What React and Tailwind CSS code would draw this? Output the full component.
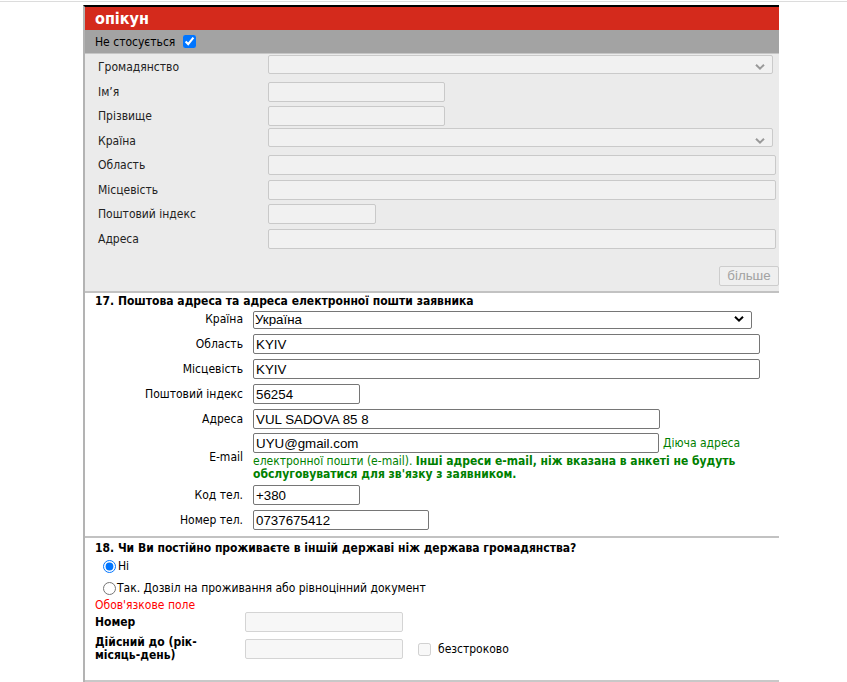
import React from 'react';

const LABEL_FONT = "font-['DejaVu_Sans_Condensed','DejaVu_Sans',sans-serif]";
const INPUT_FONT = "font-['Liberation_Sans',Arial,sans-serif]";

const Chevron = ({ color = '#999' }) => (
    <svg width="10" height="7" viewBox="0 0 10 7" className="pointer-events-none absolute right-[8px] top-1/2 -translate-y-1/2">
        <path d="M1 1.2l4 4 4-4" fill="none" stroke={color} strokeWidth="2" />
    </svg>
);

// disabled rows of the "опікун" block
const guardianRows = [
    { label: 'Громадянство', kind: 'select' },
    { label: 'Ім’я', kind: 'input', w: 'w-[177px]' },
    { label: 'Прізвище', kind: 'input', w: 'w-[177px]' },
    { label: 'Країна', kind: 'select' },
    { label: 'Область', kind: 'input', w: 'w-[508px]' },
    { label: 'Місцевість', kind: 'input', w: 'w-[508px]' },
    { label: 'Поштовий індекс', kind: 'input', w: 'w-[108px]' },
    { label: 'Адреса', kind: 'input', w: 'w-[508px]' },
];

const addressRows = [
    { label: 'Область', value: 'KYIV', w: 'w-[507px]' },
    { label: 'Місцевість', value: 'KYIV', w: 'w-[507px]' },
    { label: 'Поштовий індекс', value: '56254', w: 'w-[107px]' },
    { label: 'Адреса', value: 'VUL SADOVA 85 8', w: 'w-[407px]' },
];

const TextBox = ({ value, w }) => (
    <input
        readOnly
        value={value}
        className={`${w} ${INPUT_FONT} h-[20px] rounded-[2px] border border-[#767676] bg-white px-[2px] text-[13.333px] text-black outline-none`}
    />
);

const Row = ({ label, children, h = 'h-[25px]' }) => (
    <div className={`flex items-center ${h}`}>
        <div className="w-[158px] text-right text-[12px] text-black">{label}</div>
        <div className="ml-[10px]">{children}</div>
    </div>
);

export default function App() {
    return (
        <div className={`min-h-screen bg-white ${LABEL_FONT}`}>
            <div className="h-px bg-[#dcdcdc] mt-px" />
            <div className="ml-[83px] mt-[3px] w-[696px] border-t-2 border-l-2 border-t-black border-l-[#b3b3b3]">
                {/* header */}
                <div className="flex h-[23px] items-center bg-[#d42a1c] pl-[10px] text-[16px] font-bold leading-none text-white">
                    опікун
                </div>
                <div className="flex h-[24px] items-center border-b border-[#c6c6c6] bg-[#a3a3a3] pl-[10px] text-[12px] text-black">
                    Не стосується
                    <input type="checkbox" defaultChecked className="ml-[8px] h-[13px] w-[13px] accent-[#0075ff]" />
                </div>

                {/* disabled guardian block */}
                <div className="border-b-2 border-[#c2c2c2] bg-[#ebebeb] pb-[5px] pl-[13px] pt-px">
                    {guardianRows.map((r) => (
                        <div key={r.label} className="flex h-[24.5px] items-center">
                            <div className="w-[170px] text-[12px] text-[#222]">{r.label}</div>
                            {r.kind === 'select' ? (
                                <div className="relative">
                                    <select disabled className="h-[19px] w-[505px] appearance-none rounded-[2px] border border-[#cacaca] bg-[#f1f1f1]" />
                                    <Chevron />
                                </div>
                            ) : (
                                <input disabled className={`${r.w} h-[20px] rounded-[2px] border border-[#c9c9c9] bg-[#f1f1f1]`} />
                            )}
                        </div>
                    ))}
                    <div className="mt-[15px] flex justify-end">
                        <button
                            disabled
                            className={`${INPUT_FONT} h-[20px] w-[60px] rounded-[2px] border border-[#cdcdcd] bg-[#efefef] text-[13.333px] leading-none text-[#a2a2a2]`}
                        >
                            більше
                        </button>
                    </div>
                </div>

                {/* 17 */}
                <div className="border-b-2 border-[#c2c2c2] bg-white pb-[4px]">
                    <div className="h-[14px] pl-[10px] pt-px text-[12px] font-bold leading-[14px] text-black">
                        17. Поштова адреса та адреса електронної пошти заявника
                    </div>
                    <Row label="Країна" h="h-[24px]">
                        <div className="relative">
                            <select className={`${INPUT_FONT} h-[18px] w-[499px] appearance-none rounded-[2px] border border-[#767676] bg-white pl-px text-[13.333px] leading-none text-black`}>
                                <option>Україна</option>
                            </select>
                            <Chevron color="#000" />
                        </div>
                    </Row>
                    {addressRows.map((r) => (
                        <Row key={r.label} label={r.label}>
                            <TextBox value={r.value} w={r.w} />
                        </Row>
                    ))}
                    <div className="flex items-center">
                        <div className="w-[158px] text-right text-[12px] text-black">E-mail</div>
                        <div className="ml-[10px] w-[507px] pb-px pt-[2px]">
                            <div className="flex items-center">
                                <TextBox value="UYU@gmail.com" w="w-[406px]" />
                                <span className="ml-[4px] text-[12px] text-[#008000]">Діюча адреса</span>
                            </div>
                            <div className="mt-[2px] text-[12px] leading-[13px] text-[#008000]">
                                електронної пошти (e-mail). <b>Інші адреси e-mail, ніж вказана в анкеті не будуть</b>
                                <br />
                                <b>обслуговуватися для зв'язку з заявником.</b>
                            </div>
                        </div>
                    </div>
                    <Row label="Код тел.">
                        <TextBox value="+380" w="w-[107px]" />
                    </Row>
                    <Row label="Номер тел.">
                        <TextBox value="0737675412" w="w-[176px]" />
                    </Row>
                </div>

                {/* 18 */}
                <div className="border-b-2 border-[#c8c8c8] bg-white pb-[18px]">
                    <div className="pl-[10px] pt-[3px] text-[12px] font-bold leading-[14px] text-black">
                        18. Чи Ви постійно проживаєте в іншій державі ніж держава громадянства?
                    </div>
                    <label className="mt-[4px] flex h-[14px] items-center pl-[18px] text-[12px] text-black">
                        <input type="radio" name="res" defaultChecked className="m-0 h-[13px] w-[13px] accent-[#0075ff]" />
                        <span className="ml-[2px]">Ні</span>
                    </label>
                    <label className="mt-[8px] flex h-[14px] items-center pl-[18px] text-[12px] text-black">
                        <input type="radio" name="res" className="m-0 h-[13px] w-[13px]" />
                        <span className="ml-px">Так. Дозвіл на проживання або рівноцінний документ</span>
                    </label>
                    <div className="mt-[4px] pl-[10px] text-[12px] leading-[12px] text-[#ff0000]">Обов'язкове поле</div>
                    <div className="mt-px flex h-[20px] items-center pl-[10px]">
                        <div className="w-[150px] pr-[10px] text-[12px] font-bold text-black">Номер</div>
                        <input disabled className="h-[20px] w-[158px] rounded-[2px] border border-[#d4d4d4] bg-[#f7f7f7]" />
                    </div>
                    <div className="mt-[4px] flex items-center pl-[10px]">
                        <div className="w-[150px] pr-[10px] text-[12px] font-bold leading-[13px] text-black">Дійсний до (рік-місяць-день)</div>
                        <input disabled className="h-[20px] w-[158px] rounded-[2px] border border-[#d4d4d4] bg-[#f7f7f7]" />
                        <input type="checkbox" disabled className="m-0 ml-[15px] h-[13px] w-[13px]" />
                        <span className="ml-[7px] text-[12px] text-black">безстроково</span>
                    </div>
                </div>
                <div className="h-[10px] bg-[#ebebeb]" />
            </div>
        </div>
    );
}
